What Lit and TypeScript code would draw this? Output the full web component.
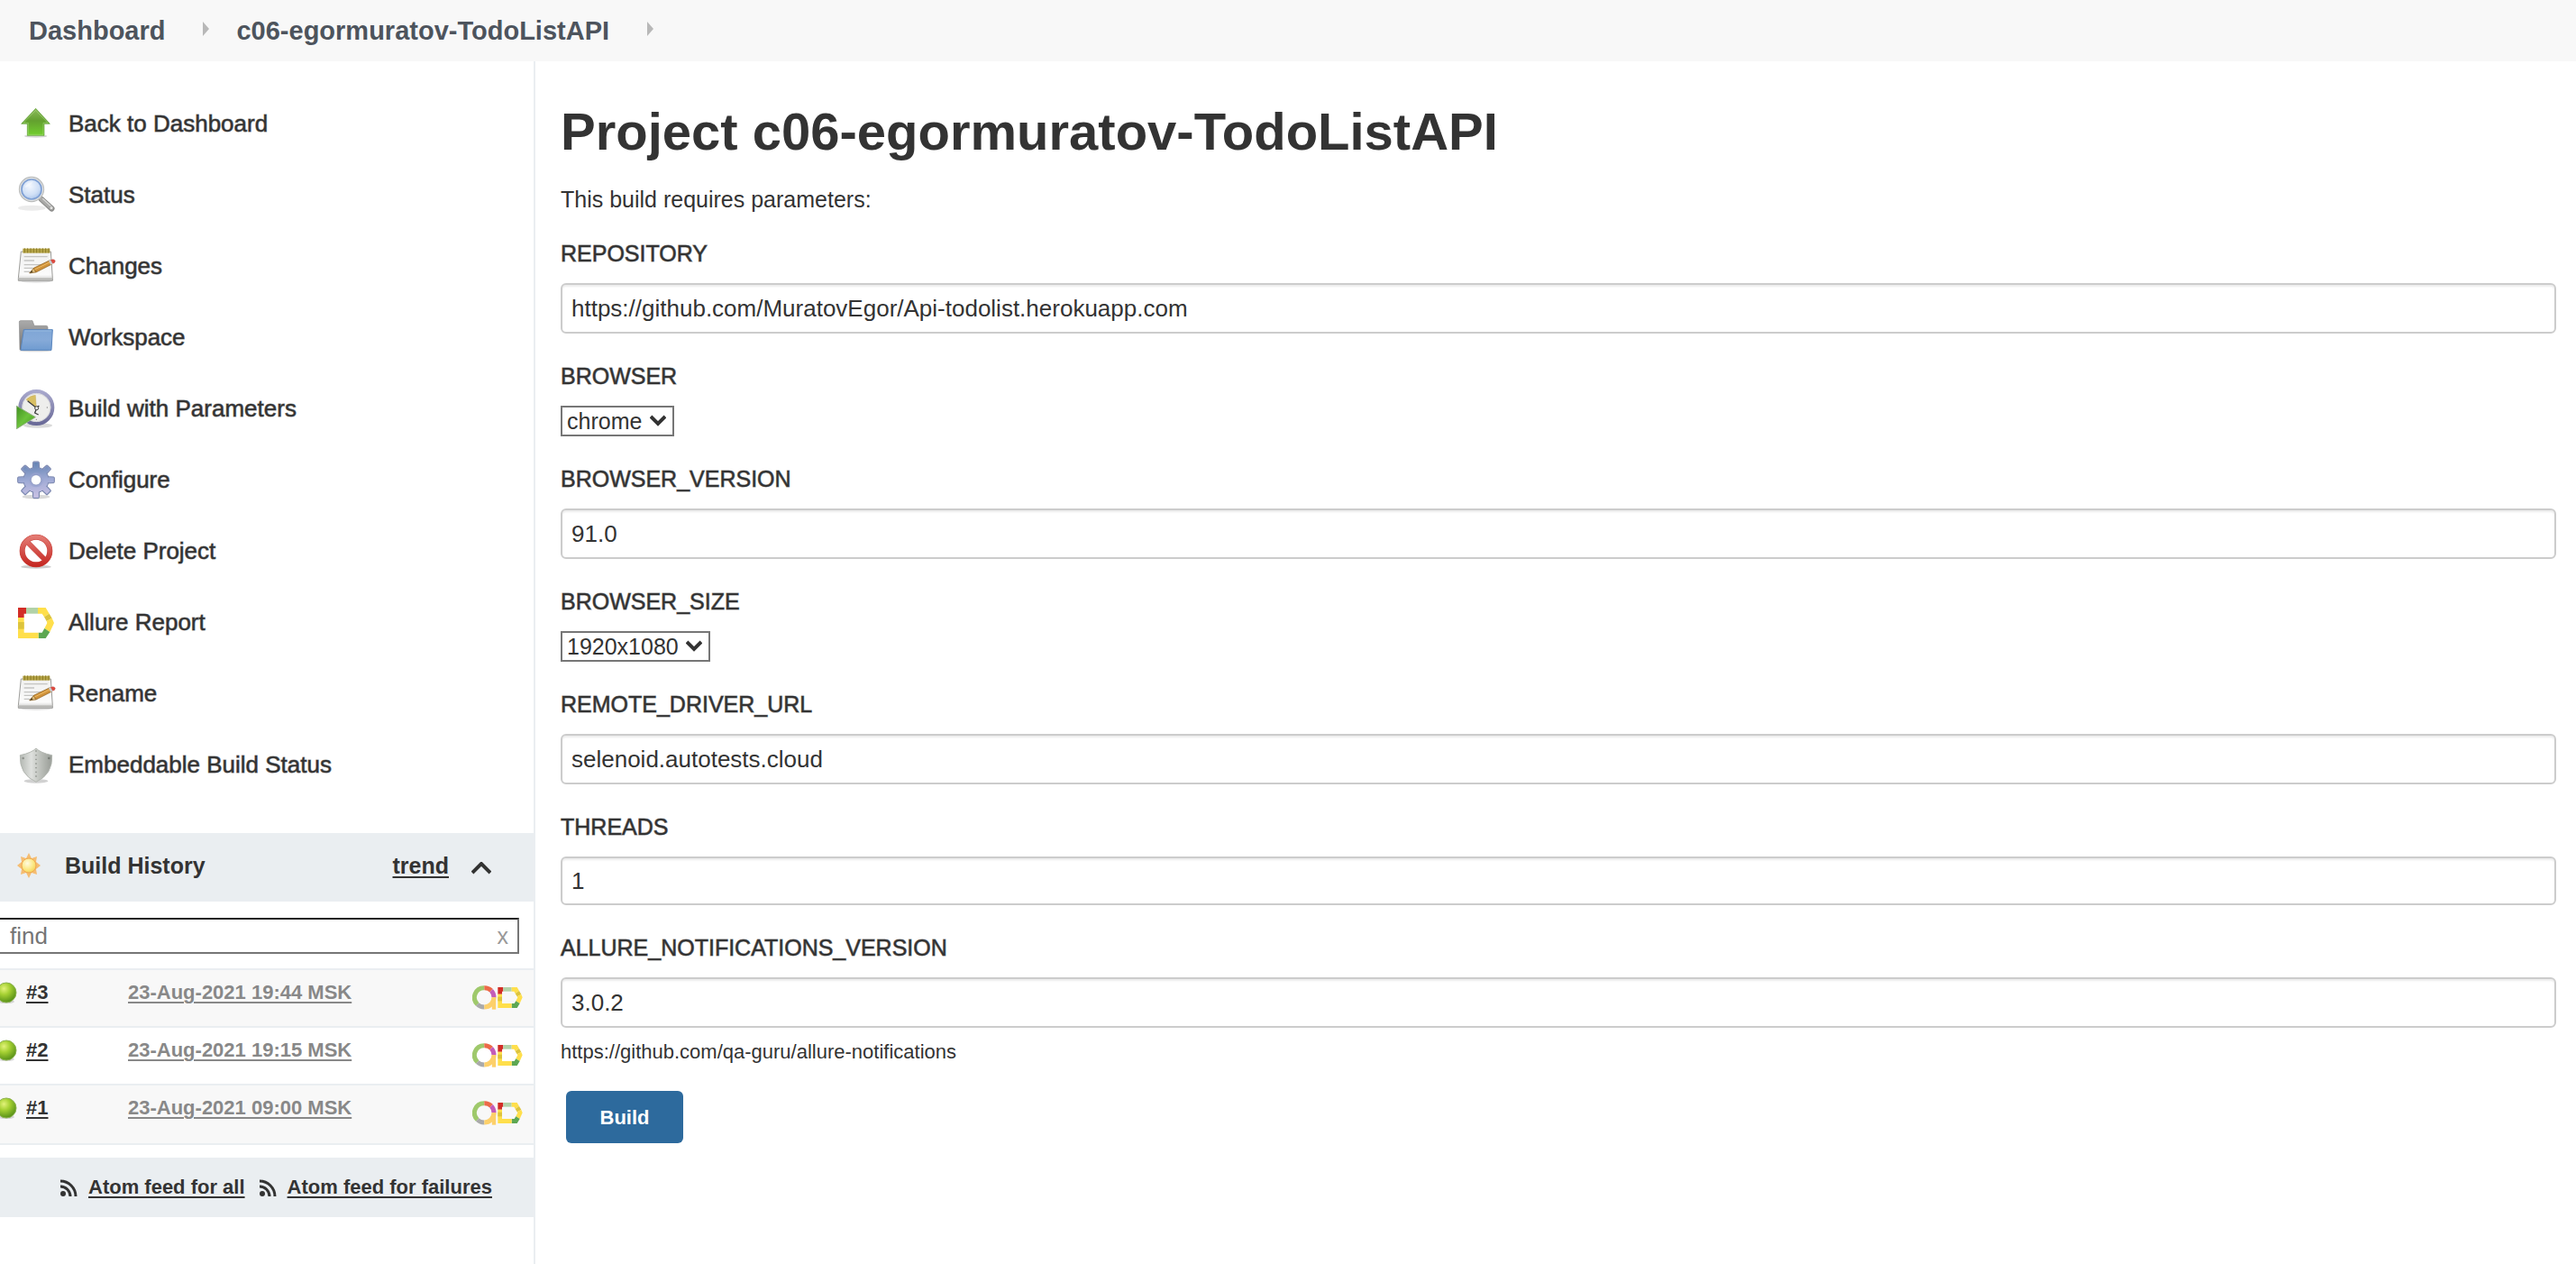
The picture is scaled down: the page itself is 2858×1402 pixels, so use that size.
import { LitElement, html, css, svg, nothing } from "lit";
import { customElement, property, state } from "lit/decorators.js";

/* Sidebar task icons share one 132-unit square canvas. */
const gearTeeth = [0, 45, 90, 135, 180, 225, 270, 315];

const taskIcons: Record<string, unknown> = {
  up: svg`
    <defs>
      <linearGradient id="up" x1="0" y1="0" x2="0" y2="1">
        <stop offset="0" stop-color="#8dbb5c" /><stop offset=".45" stop-color="#63a02f" /><stop offset="1" stop-color="#72cf2e" />
      </linearGradient>
    </defs>
    <ellipse cx="65" cy="105" rx="38" ry="5" fill="#000" opacity=".16" />
    <path d="M65 13 L112 64 H93 V103 H37 V64 H17 Z" fill="url(#up)" stroke="#5f9e35" stroke-width="2" stroke-linejoin="round" />
    <path d="M65 19 L105 61 H90 V100 H40 V61 H24 Z" fill="none" stroke="#b4e08a" stroke-width="2" opacity=".7" />`,
  search: svg`
    <defs>
      <radialGradient id="lens" cx=".42" cy=".35" r=".75">
        <stop offset="0" stop-color="#f2f7fe" /><stop offset=".6" stop-color="#cfdff6" /><stop offset="1" stop-color="#9dbbe6" />
      </radialGradient>
    </defs>
    <ellipse cx="52" cy="107" rx="46" ry="9" fill="#000" opacity=".08" />
    <path d="M84 78 L118 109" stroke="#8b8b89" stroke-width="19" stroke-linecap="round" />
    <path d="M84 78 L117 108" stroke="#a9a9a7" stroke-width="13" stroke-linecap="round" />
    <path d="M88 76 L119 104" stroke="#d6d6d4" stroke-width="4" />
    <circle cx="117" cy="107" r="6" fill="#e2e2e0" stroke="#8b8b89" stroke-width="2" />
    <circle cx="51" cy="45" r="39" fill="#fff" stroke="#b9bbbb" stroke-width="7" />
    <circle cx="51" cy="45" r="38" fill="none" stroke="#e6e7e7" stroke-width="3" />
    <circle cx="51" cy="45" r="33" fill="url(#lens)" stroke="#7d9fd4" stroke-width="5" />
    <path d="M28 40 Q34 20 56 20 Q48 34 28 40Z" fill="#fff" opacity=".45" />`,
  notepad: svg`
    <defs>
      <linearGradient id="pg" x1="0" y1="0" x2="0" y2="1">
        <stop offset="0" stop-color="#f0f0ef" /><stop offset=".8" stop-color="#fbfbfb" /><stop offset="1" stop-color="#c6c6c4" />
      </linearGradient>
    </defs>
    <ellipse cx="66" cy="115" rx="50" ry="4" fill="#000" opacity=".12" />
    <path d="M16 15 H115 L121 104 V112 H7 V104 Z" fill="url(#pg)" stroke="#9c9c99" stroke-width="3" stroke-linejoin="round" />
    <path d="M9 106 H120" stroke="#b5b5b2" stroke-width="5" />
    <rect x="22" y="5" width="90" height="15" fill="#b6a548" />
    <path d="M28 4v15 M38 4v15 M48 4v15 M58 4v15 M68 4v15 M78 4v15 M88 4v15 M98 4v15 M108 4v15" stroke="#8a7a26" stroke-width="3" />
    <path d="M26 32 H104 M26 45 H60 M26 59 H84 M26 70 H56 M26 82 H46" stroke="#c4c4c2" stroke-width="4" />
    <path d="M44 87 L58 70 L66 84 Z" fill="#d9b877" stroke="#8a5d1d" stroke-width="2" />
    <path d="M44 87 L52 78 L55 84 Z" fill="#4c3a1c" />
    <path d="M58 70 L112 44 L119 57 L66 84 Z" fill="#d0923a" stroke="#8a5d1d" stroke-width="2" />
    <path d="M61 75 L115 49" stroke="#ecbb67" stroke-width="3" />
    <path d="M108 46 L115 43 L122 55 L115 59 Z" fill="#c9cdd0" />
    <path d="M115 43 Q126 38 130 46 Q130 53 122 55 Z" fill="#e0493f" stroke="#a8342c" stroke-width="1" />`,
  folder: svg`
    <defs>
      <linearGradient id="fb" x1="0" y1="0" x2="0" y2="1">
        <stop offset="0" stop-color="#ababab" /><stop offset="1" stop-color="#6f6f6f" />
      </linearGradient>
      <linearGradient id="ff" x1="0" y1="0" x2="0" y2="1">
        <stop offset="0" stop-color="#7fa6d6" /><stop offset=".5" stop-color="#86aad8" /><stop offset="1" stop-color="#6f9bd0" />
      </linearGradient>
    </defs>
    <ellipse cx="64" cy="108" rx="54" ry="4" fill="#000" opacity=".15" />
    <path d="M10 12 Q10 8 15 8 H54 L60 25 H100 Q105 25 105 31 V105 H12 Z" fill="url(#fb)" stroke="#8b8b8b" stroke-width="2" />
    <path d="M25 38 H121 L117 106 H15 Z" fill="url(#ff)" stroke="#5a86bf" stroke-width="3" stroke-linejoin="round" />
    <path d="M29 42 H117" stroke="#a8c4e6" stroke-width="2" />`,
  clock: svg`
    <defs>
      <linearGradient id="rim" x1="0" y1="0" x2="0" y2="1">
        <stop offset="0" stop-color="#a8a8cc" /><stop offset="1" stop-color="#6a6a98" />
      </linearGradient>
      <linearGradient id="play" x1="0" y1="0" x2="1" y2="1">
        <stop offset="0" stop-color="#3f8f20" /><stop offset=".5" stop-color="#6cc23c" /><stop offset="1" stop-color="#3f9a1d" />
      </linearGradient>
    </defs>
    <ellipse cx="72" cy="120" rx="48" ry="8" fill="#000" opacity=".15" />
    <circle cx="67" cy="60" r="54" fill="#eeeeec" stroke="url(#rim)" stroke-width="12" />
    <circle cx="67" cy="60" r="47" fill="none" stroke="#c7c7cf" stroke-width="2" />
    <path d="M67 60 L33 34 Q46 20 64 19 Z" fill="#d8bf63" stroke="#bda24a" stroke-width="1" />
    <path d="M38 38 L68 62 L76 54 M68 62 L62 78 L74 84" fill="none" stroke="#3c3c3c" stroke-width="4" />
    <circle cx="68" cy="62" r="6" fill="#eee" stroke="#3c3c3c" stroke-width="3" />
    <circle cx="103" cy="60" r="2" fill="#888" /><circle cx="67" cy="100" r="2" fill="#888" />
    <path d="M1 55 L64 92 L1 131 Z" fill="url(#play)" stroke="#8fb07c" stroke-width="3" stroke-linejoin="round" />`,
  gear: svg`
    <defs>
      <linearGradient id="gr" gradientUnits="userSpaceOnUse" x1="60" y1="2" x2="70" y2="124">
        <stop offset="0" stop-color="#6080b0" /><stop offset=".5" stop-color="#9da9d4" /><stop offset="1" stop-color="#cbc2e4" />
      </linearGradient>
    </defs>
    <ellipse cx="66" cy="120" rx="46" ry="7" fill="#000" opacity=".15" />
    <g stroke="#7783ab" stroke-width="3" stroke-linejoin="round" fill="#9aa6d0">
      ${gearTeeth.map((a) => svg`<path transform="rotate(${a} 66 64)" d="M55 30 L56 6 Q56 3 59 3 H73 Q76 3 76 6 L77 30 Z" />`)}
      <circle cx="66" cy="64" r="42" />
    </g>
    <g fill="url(#gr)">
      <circle cx="66" cy="64" r="40" />
      <path d="M57 32 L58 6 H74 L75 32 Z M57 96 L58 122 H74 L75 96 Z M34 55 L8 56 V72 L34 73 Z M98 55 L124 56 V72 L98 73 Z" />
      <path d="M37 47 L20 28 L30 18 L49 35 Z M95 47 L112 28 L102 18 L83 35 Z M37 81 L20 100 L30 110 L49 93 Z M95 81 L112 100 L102 110 L83 93 Z" />
    </g>
    <circle cx="66" cy="64" r="24" fill="#98a3ce" opacity=".7" />
    <circle cx="66" cy="64" r="17" fill="#fff" stroke="#7f8cb8" stroke-width="2" />`,
  ban: svg`
    <defs>
      <linearGradient id="bn" gradientUnits="userSpaceOnUse" x1="66" y1="8" x2="66" y2="118">
        <stop offset="0" stop-color="#e58078" /><stop offset=".5" stop-color="#d4504a" /><stop offset="1" stop-color="#c4231d" />
      </linearGradient>
    </defs>
    <ellipse cx="66" cy="116" rx="50" ry="6" fill="#000" opacity=".2" />
    <circle cx="66" cy="63" r="46" fill="none" stroke="#c8443d" stroke-width="18" />
    <path d="M34 31 L98 95" stroke="#c8443d" stroke-width="17" />
    <circle cx="66" cy="63" r="46" fill="none" stroke="url(#bn)" stroke-width="15" />
    <path d="M34 31 L98 95" stroke="url(#bn)" stroke-width="14" />`,
  allure: svg`
    <path d="M6 15 H33 V35 H26 V48 H6 Z" fill="#d22d26" />
    <path d="M33 15 H72 V35 H33 Z" fill="#b2d2a8" />
    <path d="M72 15 H98 L110 35 L93 46 L86 35 H72 Z" fill="#ffdf4b" />
    <path d="M110 35 L119 50 L101 60 L93 46 Z" fill="#ddc43c" />
    <path d="M119 50 L126 66 L112 96 L94 84 L103 66 L101 60 Z" fill="#ffdf4b" />
    <path d="M112 96 L98 117 H74 V98 H86 L94 84 Z" fill="#5da752" />
    <path d="M6 48 H26 V98 H74 V117 H6 Z" fill="#ffdf4b" />
    <path d="M6 63 H26 V86 H6 Z" fill="#ddc43c" />`,
  shield: svg`
    <defs>
      <linearGradient id="sh" x1="0" y1="0" x2="1" y2="0">
        <stop offset="0" stop-color="#b4b8b3" /><stop offset=".35" stop-color="#dfe1de" /><stop offset=".55" stop-color="#c6c9c4" /><stop offset="1" stop-color="#989c96" />
      </linearGradient>
    </defs>
    <ellipse cx="66" cy="118" rx="40" ry="7" fill="#000" opacity=".18" />
    <path d="M66 9 Q80 24 119 32 Q122 96 66 121 Q10 96 13 32 Q52 24 66 9Z" fill="url(#sh)" stroke="#b3b7b1" stroke-width="3" />
    <path d="M66 16 V114" stroke="#9da19b" stroke-width="6" stroke-dasharray="4 10" />
    <circle cx="23" cy="42" r="4" fill="#8f938d" /><circle cx="109" cy="42" r="4" fill="#777b75" />`,
};

@customElement("task-icon")
export class TaskIcon extends LitElement {
  @property() name = "";

  static styles = css`
    :host { display: block; width: 44px; height: 44px; }
    .glyph { display: block; width: 100%; height: 100%; }
  `;

  render() {
    return html`<svg class="glyph" viewBox="0 0 132 132" aria-hidden="true">${taskIcons[this.name] ?? nothing}</svg>`;
  }
}

@customElement("build-ball")
export class BuildBall extends LitElement {
  static styles = css`
    :host { display: block; width: 24px; height: 24px; }
    .glyph { display: block; width: 100%; height: 100%; }
  `;

  render() {
    return html`<svg class="glyph" viewBox="0 0 24 24" role="img" aria-label="Success">
      <defs>
        <radialGradient id="ball" cx=".38" cy=".3" r=".75">
          <stop offset="0" stop-color="#e2f27a" /><stop offset=".4" stop-color="#a6d133" /><stop offset="1" stop-color="#4f8a14" />
        </radialGradient>
      </defs>
      <ellipse cx="12" cy="22" rx="9" ry="2" fill="#000" opacity=".15" />
      <circle cx="12" cy="12" r="11" fill="url(#ball)" stroke="#8db350" stroke-width="1" />
    </svg>`;
  }
}

/* Allure notifications badge: multicolour ring next to the report mark. */
const allureBadge = html`<svg class="badge" viewBox="0 0 168 81" role="img" aria-label="Allure Report">
  <g fill="none" stroke-width="15">
    <path d="M40 8 A32 32 0 0 0 17 63" stroke="#9fc96b" />
    <path d="M17 63 A32 32 0 0 0 40 72" stroke="#aaaaaa" />
    <path d="M40 8 A32 32 0 0 1 63 17" stroke="#ec6a48" />
    <path d="M63 17 A32 32 0 0 1 72 40" stroke="#c45cb8" />
    <path d="M72 40 A32 32 0 0 1 40 72" stroke="#fdd06a" />
    <path d="M72 40 V80" stroke="#fdd06a" stroke-width="13" />
  </g>
  <path d="M85 6 H103 V20 H99 V29 H85 Z" fill="#d22d26" />
  <path d="M103 6 H131 V20 H103 Z" fill="#b2d2a8" />
  <path d="M131 6 H149 L156 18 L143 27 L139 20 H131 Z" fill="#ffdf4b" />
  <path d="M156 18 L163 30 L149 37 L143 27 Z" fill="#ddc43c" />
  <path d="M163 30 L167 40 L158 60 L145 52 L151 40 L149 37 Z" fill="#ffdf4b" />
  <path d="M158 60 L149 75 H131 V60 H140 L145 52 Z" fill="#5da752" />
  <path d="M85 29 H99 V60 H131 V75 H85 Z" fill="#ffdf4b" />
  <path d="M85 38 H99 V52 H85 Z" fill="#ddc43c" />
</svg>`;

const feedIcon = html`<svg class="feed-icon" viewBox="0 0 19 19" aria-hidden="true">
  <circle cx="3" cy="16" r="3" fill="#333" />
  <path d="M0 8 A11 11 0 0 1 11 19 M0 2 A17 17 0 0 1 17 19" fill="none" stroke="#333" stroke-width="3" />
</svg>`;

const sunIcon = html`<svg class="sun" viewBox="0 0 28 28" aria-hidden="true">
  <defs>
    <radialGradient id="sun" cx=".4" cy=".35" r=".7">
      <stop offset="0" stop-color="#fffbe0" /><stop offset=".6" stop-color="#fbe884" /><stop offset="1" stop-color="#f4cf55" />
    </radialGradient>
  </defs>
  <path d="M14 0 L17 6 L23 4 L22 10 L27 14 L22 18 L23 24 L17 22 L14 28 L11 22 L5 24 L6 18 L1 14 L6 10 L5 4 L11 6 Z" fill="#f5bd72" />
  <circle cx="14" cy="14" r="8" fill="url(#sun)" stroke="#f0a850" stroke-width="1" />
</svg>`;

const crumbArrow = html`<svg class="crumb-arrow" viewBox="0 0 7 16" aria-hidden="true"><path d="M0 0 L7 8 L0 16 Z" fill="#b8b8b8" /></svg>`;

interface Param {
  name: string;
  kind: "text" | "number" | "select";
  value: string;
  help?: string;
}

@customElement("app-root")
export class AppRoot extends LitElement {
  @state() private query = "";

  private tasks = [
    ["up", "Back to Dashboard"],
    ["search", "Status"],
    ["notepad", "Changes"],
    ["folder", "Workspace"],
    ["clock", "Build with Parameters"],
    ["gear", "Configure"],
    ["ban", "Delete Project"],
    ["allure", "Allure Report"],
    ["notepad", "Rename"],
    ["shield", "Embeddable Build Status"],
  ];

  private builds = [
    ["#3", "23-Aug-2021 19:44 MSK"],
    ["#2", "23-Aug-2021 19:15 MSK"],
    ["#1", "23-Aug-2021 09:00 MSK"],
  ];

  private params: Param[] = [
    { name: "REPOSITORY", kind: "text", value: "https://github.com/MuratovEgor/Api-todolist.herokuapp.com" },
    { name: "BROWSER", kind: "select", value: "chrome" },
    { name: "BROWSER_VERSION", kind: "text", value: "91.0" },
    { name: "BROWSER_SIZE", kind: "select", value: "1920x1080" },
    { name: "REMOTE_DRIVER_URL", kind: "text", value: "selenoid.autotests.cloud" },
    { name: "THREADS", kind: "number", value: "1" },
    { name: "ALLURE_NOTIFICATIONS_VERSION", kind: "text", value: "3.0.2", help: "https://github.com/qa-guru/allure-notifications" },
  ];

  static styles = css`
    :host {
      display: flex;
      flex-direction: column;
      min-height: 100vh;
      background: #fff;
      color: #333;
      font-family: "Liberation Sans", Arial, sans-serif;
      font-size: 26px;
      line-height: 30px;
    }
    *, *::before, *::after { box-sizing: border-box; }
    a { color: inherit; }
    button, input, select { font: inherit; color: inherit; margin: 0; }

    .crumbs {
      display: flex;
      align-items: center;
      height: 68px;
      padding: 0 32px;
      background: #f8f8f8;
      color: #4d545d;
      font-size: 29px;
      font-weight: 700;
    }
    .crumb { text-decoration: none; }
    .crumb-arrow { width: 7px; height: 16px; margin: 0 30px 4px 42px; }

    .body { flex: 1; display: grid; grid-template-columns: 594px minmax(0, 1fr); }

    .side { border-right: 2px solid #eaeef1; overflow: hidden; }
    .tasks { list-style: none; margin: 0; padding: 30px 0 36px; }
    .task {
      display: flex;
      align-items: center;
      gap: 14px;
      height: 79px;
      padding-left: 18px;
      text-decoration: none;
    }
    /* A thin translucent outline gives the regular face a medium weight. */
    .task-text, .param-label { -webkit-text-stroke: 1px rgba(51, 51, 51, 0.6); }
    .task-text { padding-bottom: 2px; }

    .history-head {
      display: flex;
      align-items: center;
      padding: 21px 47px 25px 18px;
      background: #eaeef1;
      font-size: 25px;
      font-weight: 700;
    }
    .sun { width: 28px; height: 28px; margin-right: 26px; }
    .history-title { flex: 1; margin: 0; font-size: inherit; }
    .trend, .num, .date, .feed-text {
      text-decoration: underline;
      text-decoration-thickness: 2px;
      text-underline-offset: 3px;
      text-decoration-skip-ink: auto;
    }
    .toggle { display: flex; margin-left: 25px; padding: 6px 0 0; border: 0; background: none; }
    .toggle-icon { width: 22px; height: 14px; }

    .find {
      display: flex;
      align-items: center;
      height: 40px;
      margin: 18px 16px 16px -2px;
      border: 2px solid #767676;
      border-top-color: #222;
    }
    .find-input { flex: 1; min-width: 0; padding: 0 0 0 11px; border: 0; outline: 0; background: none; }
    .find-input::placeholder { color: #757575; opacity: 1; }
    .find-clear { padding: 0 10px; border: 0; background: none; color: #999; font-size: 25px; line-height: 30px; }

    .builds { width: 100%; border-collapse: separate; border-spacing: 0; table-layout: fixed; border-top: 2px solid #eaeef1; font-size: 22px; font-weight: 700; }
    .build-row:nth-child(odd) { background: #f8f8f8; }
    .cell { height: 64px; padding: 10px 0 0; border-bottom: 2px solid #eaeef1; vertical-align: top; text-align: left; }
    .build-row:last-child .cell { height: 66px; }
    .cell-num { width: 142px; }
    .cell-badge { width: 80px; padding: 17px 12px 0; }
    .run { display: flex; align-items: center; gap: 10px; height: 30px; margin-left: -5px; }
    .date { color: #888; }
    .badge { display: block; width: 56px; height: 27px; }

    .feeds {
      display: flex;
      align-items: center;
      gap: 16px;
      height: 66px;
      margin-top: 14px;
      padding-left: 67px;
      background: #eaeef1;
      font-size: 22px;
      font-weight: 700;
    }
    .feed { display: flex; align-items: center; gap: 12px; text-decoration: none; }
    .feed-icon { width: 19px; height: 19px; }

    .main { padding: 42px 22px 42px 28px; }
    .title { margin: 0 0 24px; font-size: 58px; line-height: 72px; font-weight: 700; }
    .intro { margin: 0 0 30px; font-size: 25px; }
    .form { display: flex; flex-direction: column; align-items: stretch; gap: 32px; }
    .param { display: flex; flex-direction: column; align-items: flex-start; }
    .param-label { margin-bottom: 18px; font-size: 25px; }
    .text {
      width: 100%;
      height: 56px;
      padding: 0 10px;
      border: 2px solid #ccc;
      border-radius: 6px;
      background: #fff;
      box-shadow: inset 0 2px 2px rgba(0, 0, 0, 0.08);
    }
    .text[type="number"] { height: 54px; appearance: textfield; -moz-appearance: textfield; }
    .select-wrap { position: relative; display: flex; }
    .select {
      height: 34px;
      padding: 0 33px 0 5px;
      border: 2px solid #767676;
      border-radius: 0;
      background: #fff;
      appearance: none;
      font-size: 25px;
      line-height: 30px;
    }
    .select-icon { position: absolute; right: 9px; top: 10px; width: 18px; height: 13px; pointer-events: none; }
    .help { margin: 12px 0 0; font-size: 22px; }
    .submit {
      width: 130px;
      height: 58px;
      margin: -4px 0 0 6px;
      padding: 2px 0 0;
      border: 0;
      border-radius: 6px;
      background: #2d6a9d;
      color: #fff;
      font-size: 22px;
      font-weight: 700;
    }
  `;

  private control(p: Param) {
    if (p.kind === "select") {
      return html`<div class="select-wrap">
        <select class="select" id=${p.name}><option>${p.value}</option></select>
        <svg class="select-icon" viewBox="0 0 18 13" aria-hidden="true"><path d="M1 2 L9 10 L17 2" fill="none" stroke="#333" stroke-width="4" /></svg>
      </div>`;
    }
    return html`<input class="text" id=${p.name} type=${p.kind} .value=${p.value} />`;
  }

  render() {
    return html`
      <nav class="crumbs" aria-label="Breadcrumb">
        <a class="crumb" href="#dashboard">Dashboard</a>${crumbArrow}
        <a class="crumb" href="#project">c06-egormuratov-TodoListAPI</a>${crumbArrow}
      </nav>
      <div class="body">
        <aside class="side">
          <ul class="tasks">
            ${this.tasks.map(
              ([icon, label]) => html`<li>
                <a class="task" href="#${icon}"><task-icon name=${icon}></task-icon><span class="task-text">${label}</span></a>
              </li>`
            )}
          </ul>
          <div class="history-head">
            ${sunIcon}
            <h2 class="history-title">Build History</h2>
            <a class="trend" href="#trend">trend</a>
            <button class="toggle" type="button" aria-label="Collapse">
              <svg class="toggle-icon" viewBox="0 0 22 14" aria-hidden="true"><path d="M1 12 L11 2 L21 12" fill="none" stroke="#333" stroke-width="4" /></svg>
            </button>
          </div>
          <div class="find">
            <input
              class="find-input"
              type="text"
              placeholder="find"
              aria-label="find"
              .value=${this.query}
              @input=${(e: Event) => (this.query = (e.target as HTMLInputElement).value)}
            />
            <button class="find-clear" type="button" aria-label="Clear" @click=${() => (this.query = "")}>x</button>
          </div>
          <table class="builds" aria-label="Build History">
            <tbody>
              ${this.builds
                .filter(([num, date]) => (num + " " + date).includes(this.query))
                .map(
                  ([num, date]) => html`<tr class="build-row">
                    <th class="cell cell-num" scope="row">
                      <span class="run"><build-ball></build-ball><a class="num" href=${num}>${num}</a></span>
                    </th>
                    <td class="cell"><a class="date" href=${num}>${date}</a></td>
                    <td class="cell cell-badge"><a href="#allure">${allureBadge}</a></td>
                  </tr>`
                )}
            </tbody>
          </table>
          <div class="feeds">
            <a class="feed" href="#all">${feedIcon}<span class="feed-text">Atom feed for all</span></a>
            <a class="feed" href="#failures">${feedIcon}<span class="feed-text">Atom feed for failures</span></a>
          </div>
        </aside>
        <main class="main">
          <h1 class="title">Project c06-egormuratov-TodoListAPI</h1>
          <p class="intro">This build requires parameters:</p>
          <form class="form" @submit=${(e: Event) => e.preventDefault()}>
            ${this.params.map(
              (p) => html`<div class="param">
                <label class="param-label" for=${p.name}>${p.name}</label>
                ${this.control(p)} ${p.help ? html`<p class="help">${p.help}</p>` : nothing}
              </div>`
            )}
            <button class="submit" type="submit">Build</button>
          </form>
        </main>
      </div>
    `;
  }
}
